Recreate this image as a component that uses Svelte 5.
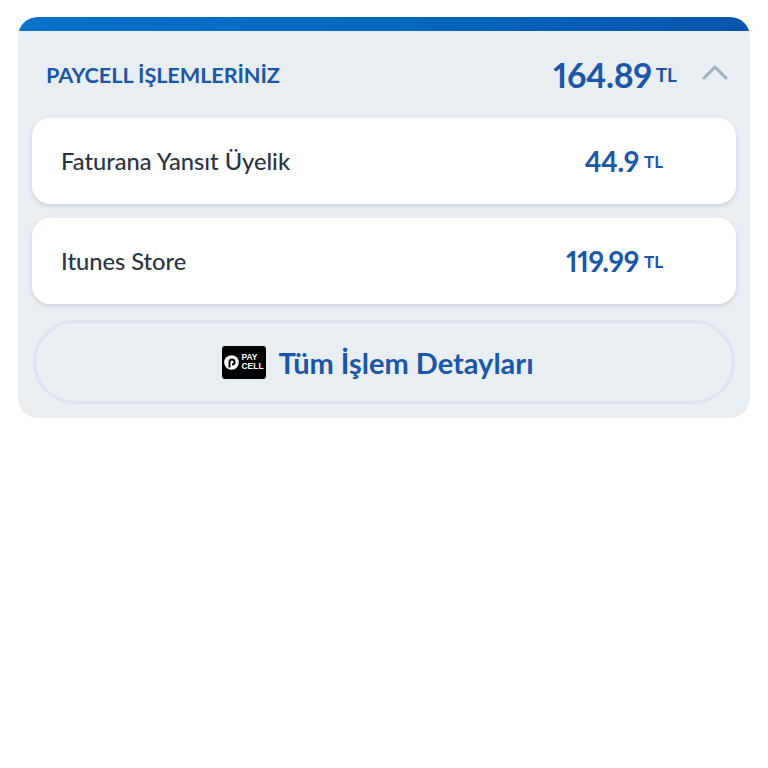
<script>
  const rows = [
    { name: 'Faturana Yansıt Üyelik', amount: '44.9' },
    { name: 'Itunes Store', amount: '119.99' }
  ];
</script>

<div class="page">
  <section class="card">
    <div class="bar"></div>
    <header class="head">
      <h2>PAYCELL İŞLEMLERİNİZ</h2>
      <div class="total"><b>164.89</b><span>TL</span></div>
      <svg class="chev" width="26" height="16" viewBox="0 0 26 16" fill="none">
        <path d="M2 14 L13 3 L24 14" stroke="#a3afbf" stroke-width="3" stroke-linecap="round" stroke-linejoin="round" />
      </svg>
    </header>
    <div class="list">
      {#each rows as r}
        <div class="row">
          <span class="name">{r.name}</span>
          <div class="amount"><b>{r.amount}</b><span>TL</span></div>
        </div>
      {/each}
    </div>
    <div class="btn">
      <div class="logo">
        <svg width="15" height="15" viewBox="0 0 18 18">
          <circle cx="9" cy="9" r="8.8" fill="#fff" />
          <path d="M6.6 15 V8.4 a3 3 0 1 1 3 3" fill="none" stroke="#000" stroke-width="2.4" />
        </svg>
        <span class="lt">PAY<br />CELL</span>
      </div>
      <span class="label">Tüm İşlem Detayları</span>
    </div>
  </section>
</div>

<style>
  :global(body) {
    margin: 0;
    background: #fff;
  }
  .page {
    width: 768px;
    height: 768px;
    padding: 17px 18px 0;
    box-sizing: border-box;
    font-family: Lato, "Open Sans", sans-serif;
    font-variant-numeric: proportional-nums;
    font-feature-settings: "pnum" 1;
  }
  .card {
    height: 401px;
    background: #e9eef3;
    border-radius: 20px;
    overflow: hidden;
    padding-bottom: 14px;
    box-sizing: border-box;
    display: flex;
    flex-direction: column;
  }
  .bar {
    height: 14px;
    flex: none;
    background: linear-gradient(90deg, #0a72cb 0%, #0568c0 50%, #0a55ad 100%);
  }
  .head {
    height: 87px;
    flex: none;
    display: flex;
    align-items: center;
    padding: 0 22px 0 28px;
    box-sizing: border-box;
  }
  h2 {
    margin: 0;
    flex: 1;
    font-size: 21.7px;
    font-weight: 700;
    color: #1a57a8;
    letter-spacing: -0.1px;
  }
  .total {
    display: flex;
    align-items: center;
    gap: 4px;
    margin-right: 25px;
    color: #1a57a8;
  }
  .total b {
    font-size: 34px;
    font-weight: 700;
    letter-spacing: -0.4px;
  }
  .total span {
    font-size: 19px;
    font-weight: 700;
  }
  .chev {
    display: block;
    margin-top: -6px;
  }
  .list {
    display: flex;
    flex-direction: column;
    gap: 14px;
    padding: 0 14px;
  }
  .row {
    height: 86px;
    background: #fff;
    border-radius: 18px;
    box-shadow: 0 2px 4px rgba(125, 135, 145, 0.3);
    display: flex;
    align-items: center;
    justify-content: space-between;
    padding: 0 73px 0 29px;
  }
  .name {
    font-size: 23.7px;
    font-weight: 500;
    color: #2b3440;
  }
  .amount {
    display: flex;
    align-items: center;
    gap: 5px;
    color: #1a57a8;
  }
  .amount b {
    font-size: 28px;
    font-weight: 700;
    letter-spacing: -0.3px;
  }
  .amount span {
    font-size: 17px;
    font-weight: 700;
  }
  .btn {
    margin: 16px 15px 0;
    height: 84px;
    box-sizing: border-box;
    border: 3px solid #dde4ee;
    border-radius: 42px;
    padding-right: 12px;
    display: flex;
    align-items: center;
    justify-content: center;
    gap: 12px;
  }
  .logo {
    width: 44px;
    height: 33px;
    flex: none;
    background: #000;
    border-radius: 3px;
    padding-left: 2px;
    box-sizing: border-box;
    display: flex;
    align-items: center;
    gap: 2px;
  }
  .lt {
    color: #fff;
    font-family: "Liberation Sans", sans-serif;
    font-size: 8.5px;
    font-weight: 700;
    line-height: 9px;
  }
  .label {
    font-size: 29px;
    font-weight: 700;
    color: #1a57a8;
  }
</style>
